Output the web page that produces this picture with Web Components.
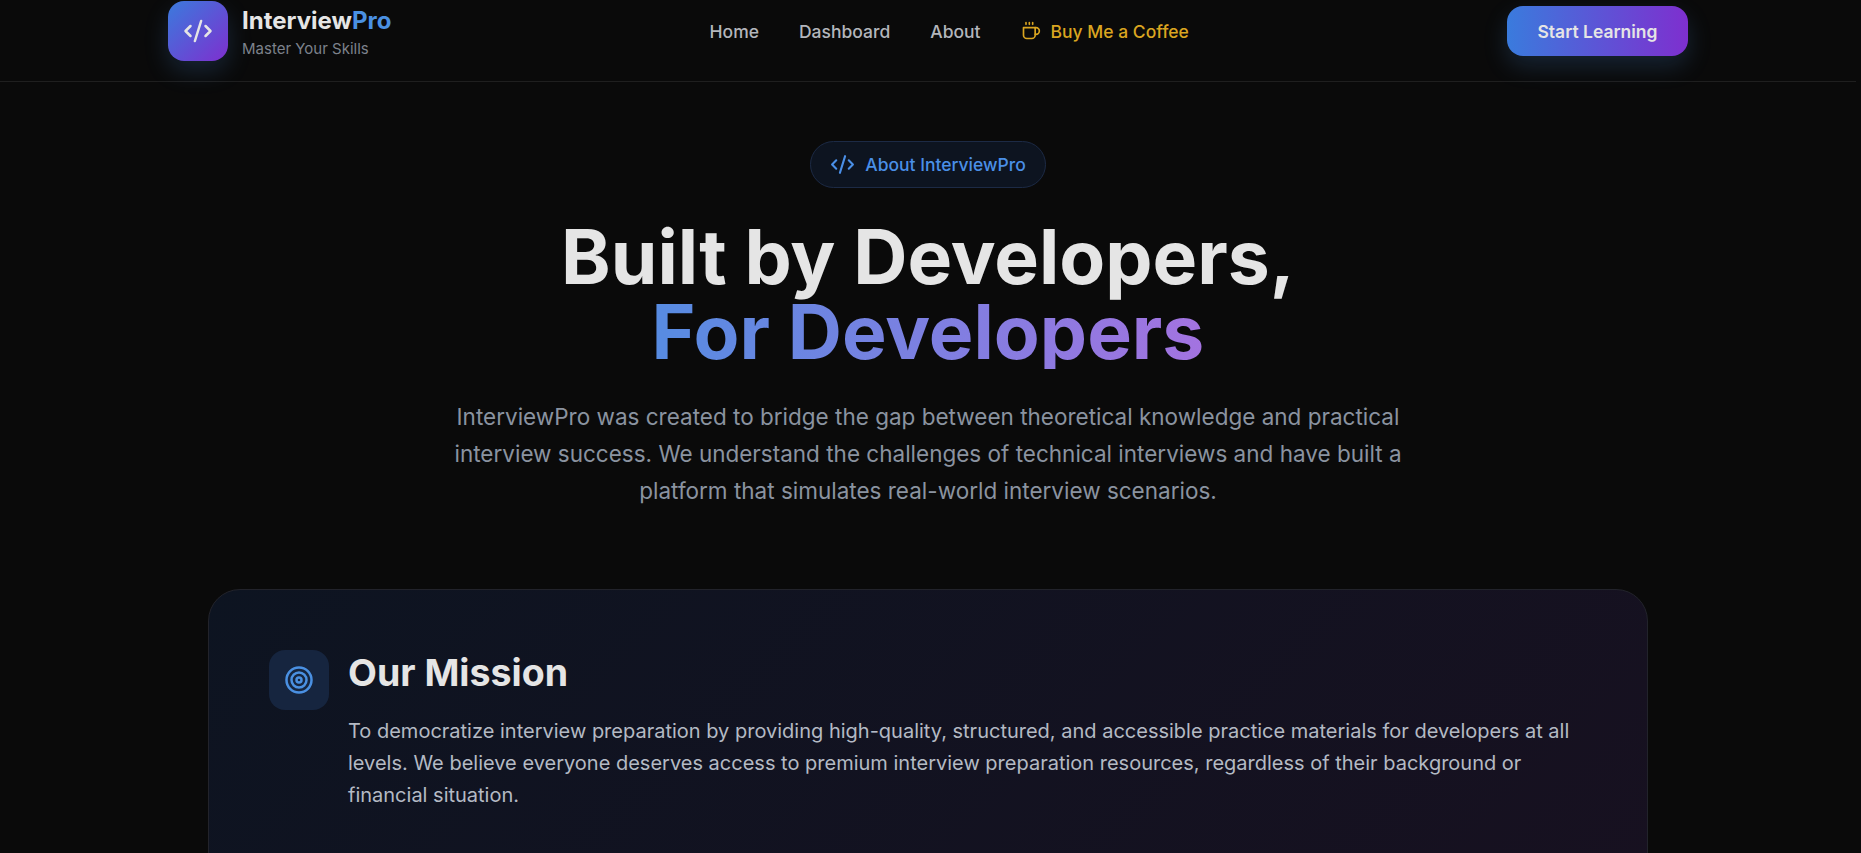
<!DOCTYPE html>
<html lang="en">
<head>
<meta charset="utf-8">
<title>InterviewPro - About</title>
<style>
  html, body { margin: 0; height: 853px; overflow: hidden; background: #0a0a0a; }
  body { font-family: Inter, "Liberation Sans", sans-serif; padding-right: 5px; color: #e5e5e5; }
</style>
</head>
<body>
<site-header></site-header>
<about-hero></about-hero>
<mission-card>
  <h2 slot="title">Our Mission</h2>
  To democratize interview preparation by providing high-quality, structured, and accessible practice materials for developers at all levels. We believe everyone deserves access to premium interview preparation resources, regardless of their background or financial situation.
</mission-card>

<script>
(function() {
  const codeIcon = size => `<svg width="${size}" height="${size}" viewBox="0 0 24 24" fill="none" stroke="currentColor" stroke-width="2" stroke-linecap="round" stroke-linejoin="round"><path d="m18 16 4-4-4-4"/><path d="m6 8-4 4 4 4"/><path d="m14.5 4-5 16"/></svg>`;

  class SiteHeader extends HTMLElement {
    constructor() {
      super();
      this.attachShadow({mode: 'open'}).innerHTML = `
<style>
  :host { display: block; border-bottom: 1px solid #1f1f1f; background: #0a0a0a; }
  .bar { display: flex; align-items: center; justify-content: space-between; width: 1520px; margin: 0 auto; padding: 1px 0 20px; }
  .brand { display: flex; align-items: center; gap: 14px; }
  .logo { width: 60px; height: 60px; border-radius: 16px; display: flex; align-items: center; justify-content: center;
    background: linear-gradient(135deg, #3a7bdd, #7e2fcf); color: #e5e5e5; box-shadow: 0 10px 25px rgba(74,144,226,.2); }
  .name { font-size: 24px; font-weight: 700; line-height: 29px; margin-top: 2px; color: #e5e5e5; }
  .name span { color: #4a90e2; }
  .tag { font-size: 15px; line-height: 18px; margin-top: 5px; color: #7d828c; }
  nav { display: flex; align-items: center; gap: 40px; font-size: 17.5px; font-weight: 500; color: #b3b6bc; }
  .coffee { display: flex; align-items: center; gap: 10px; color: #daa520; }
  button { width: 181px; height: 50px; border: 0; border-radius: 16px; font: 600 17.5px Inter, sans-serif; color: #e5e5e5;
    background: linear-gradient(90deg, #3a7bdd, #7e2fcf); box-shadow: 0 10px 25px rgba(74,144,226,.2); }
</style>
<div class="bar">
  <div class="brand">
    <div class="logo">${codeIcon(30)}</div>
    <div>
      <div class="name">Interview<span>Pro</span></div>
      <div class="tag">Master Your Skills</div>
    </div>
  </div>
  <nav>
    <span>Home</span><span>Dashboard</span><span>About</span>
    <span class="coffee">
      <svg width="20" height="20" viewBox="0 0 24 24" fill="none" stroke="currentColor" stroke-width="2" stroke-linecap="round" stroke-linejoin="round"><path d="M17 8h1a4 4 0 1 1 0 8h-1"/><path d="M3 8h14v9a4 4 0 0 1-4 4H7a4 4 0 0 1-4-4Z"/><line x1="6" x2="6" y1="2" y2="4"/><line x1="10" x2="10" y1="2" y2="4"/><line x1="14" x2="14" y1="2" y2="4"/></svg>
      Buy Me a Coffee
    </span>
  </nav>
  <button>Start Learning</button>
</div>`;
    }
  }
  customElements.define('site-header', SiteHeader);

  class AboutHero extends HTMLElement {
    constructor() {
      super();
      this.attachShadow({mode: 'open'}).innerHTML = `
<style>
  :host { display: flex; flex-direction: column; align-items: center; padding-top: 59px; text-align: center; }
  .badge { display: flex; align-items: center; gap: 10px; height: 45px; padding: 0 19px; border: 1px solid #1c2a45; border-radius: 999px;
    background: #0d1420; color: #4a8fe7; font-size: 17.5px; font-weight: 500; }
  h1 { margin: 31px 0 0; font-size: 75px; line-height: 75px; font-weight: 700; color: #e5e5e5; }
  h1 span { display: block; background: linear-gradient(90deg, #4a90e2, #b06fe0); -webkit-background-clip: text; background-clip: text; color: transparent; }
  p { margin: 29px 0 0; width: 960px; font-size: 22.5px; line-height: 37px; color: #8a93a0; }
</style>
<div class="badge">${codeIcon(25)} About InterviewPro</div>
<h1>Built by Developers,<span>For Developers</span></h1>
<p>InterviewPro was created to bridge the gap between theoretical knowledge and practical interview success. We understand the challenges of technical interviews and have built a platform that simulates real-world interview scenarios.</p>`;
    }
  }
  customElements.define('about-hero', AboutHero);

  class MissionCard extends HTMLElement {
    constructor() {
      super();
      this.attachShadow({mode: 'open'}).innerHTML = `
<style>
  :host { display: flex; gap: 19px; box-sizing: border-box; width: 1440px; min-height: 600px; margin: 80px auto 0; padding: 60px; border: 1px solid #22232b; border-radius: 32px;
    background: linear-gradient(135deg, #0d1421, #191020); }
  .icon { flex: none; width: 60px; height: 60px; border-radius: 16px; background: #16253f; color: #4a90e2; display: flex; align-items: center; justify-content: center; }
  ::slotted(h2) { margin: -1px 0 18px; font-size: 37.5px; line-height: 48px; font-weight: 700; color: #e5e5e5; }
  .text { font-size: 20px; line-height: 32px; color: #b4bac4; }
</style>
<div class="icon">
  <svg width="30" height="30" viewBox="0 0 24 24" fill="none" stroke="currentColor" stroke-width="2" stroke-linecap="round" stroke-linejoin="round"><circle cx="12" cy="12" r="10"/><circle cx="12" cy="12" r="6"/><circle cx="12" cy="12" r="2"/></svg>
</div>
<div class="text"><slot name="title"></slot><slot></slot></div>`;
    }
  }
  customElements.define('mission-card', MissionCard);
})();
</script>
</body>
</html>
